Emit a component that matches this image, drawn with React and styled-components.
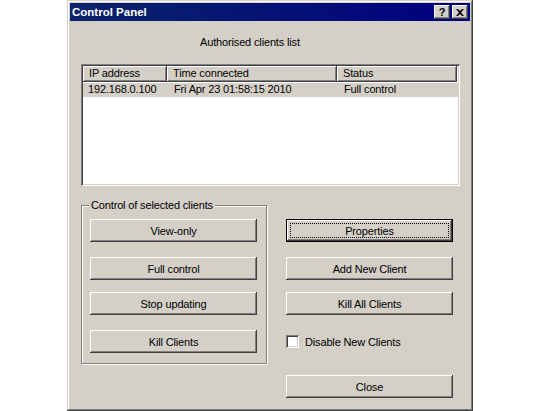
import React from "react";
import styled, { createGlobalStyle } from "styled-components";

const GlobalStyle = createGlobalStyle`
  body {
    margin: 0;
    background: #ffffff;
    font-family: "Liberation Sans", Arial, sans-serif;
    font-size: 11px;
    letter-spacing: -0.15px;
    color: #000;
  }
`;

const Page = styled.div`
  padding-left: 67px;
`;

const Window = styled.div`
  width: 406px;
  height: 411px;
  box-sizing: border-box;
  padding: 3px;
  background: #d4d0c8;
  box-shadow: inset -1px -1px #404040, inset 1px 1px #d4d0c8,
    inset -2px -2px #808080, inset 2px 2px #ffffff;
`;

const TitleBar = styled.div`
  height: 18px;
  display: flex;
  align-items: center;
  justify-content: space-between;
  padding: 0 2px 0 2px;
  background: linear-gradient(to right, #0a246a, #000080);
  color: #fff;
  font-weight: bold;
  font-size: 11.5px;
  letter-spacing: 0;
`;

const TitleButtons = styled.div`
  display: flex;
  gap: 2px;
`;

const TitleButton = styled.div`
  width: 16px;
  height: 14px;
  box-sizing: border-box;
  background: #d4d0c8;
  color: #000;
  display: flex;
  align-items: center;
  justify-content: center;
  font-size: 11px;
  font-weight: bold;
  box-shadow: inset -1px -1px #404040, inset 1px 1px #ffffff,
    inset -2px -2px #808080, inset 2px 2px #d4d0c8;
`;

const Body = styled.div`
  padding-left: 11px;
`;

const Caption = styled.div`
  margin-top: 14px;
  padding-left: 119px;
  line-height: 14px;
`;

const ListView = styled.div`
  margin-top: 15px;
  width: 379px;
  height: 122px;
  box-sizing: border-box;
  padding: 2px;
  background: #fff;
  box-shadow: inset 1px 1px #808080, inset -1px -1px #ffffff,
    inset 2px 2px #404040, inset -2px -2px #d4d0c8;
`;

const HeaderRow = styled.div`
  display: flex;
  height: 16px;
`;

const HeaderCell = styled.div`
  width: ${(p) => p.$w}px;
  box-sizing: border-box;
  padding-left: 6px;
  line-height: 15px;
  background: #d4d0c8;
  box-shadow: inset -1px -1px #404040, inset 1px 1px #ffffff,
    inset -2px -2px #808080;
`;

const Row = styled.div`
  display: flex;
  height: 14px;
  margin-top: 1px;
  background: ${(p) => (p.$selected ? "#d4d0c8" : "transparent")};
`;

const Cell = styled.div`
  width: ${(p) => p.$w}px;
  box-sizing: border-box;
  padding-left: ${(p) => p.$pl}px;
  line-height: 13px;
  white-space: nowrap;
`;

const Lower = styled.div`
  display: flex;
  gap: 19px;
  margin-top: 19px;
`;

const GroupBox = styled.div`
  position: relative;
  width: 186px;
  height: 159px;
  box-sizing: border-box;
  padding: 13px 9px 0 8px;
  border: 1px solid #808080;
  box-shadow: inset 1px 1px #ffffff, 1px 1px #ffffff;
  display: flex;
  flex-direction: column;
`;

const Legend = styled.span`
  position: absolute;
  top: -7px;
  left: 7px;
  padding: 0 2px;
  line-height: 13px;
  background: #d4d0c8;
`;

const Column = styled.div`
  width: 167px;
  display: flex;
  flex-direction: column;
`;

const Button = styled.div`
  width: 167px;
  height: 23px;
  margin-top: ${(p) => p.$mt || 0}px;
  box-sizing: border-box;
  display: flex;
  align-items: center;
  justify-content: center;
  position: relative;
  background: #d4d0c8;
  box-shadow: ${(p) =>
    p.$default
      ? "inset 0 0 0 1px #000, inset -2px -2px #404040, inset 2px 2px #ffffff, inset -3px -3px #808080"
      : "inset -1px -1px #404040, inset 1px 1px #ffffff, inset -2px -2px #808080, inset 2px 2px #d4d0c8"};
`;

const FocusRing = styled.span`
  position: absolute;
  inset: 4px;
  border: 1px dotted #000;
`;

const CheckRow = styled.label`
  height: 23px;
  margin-top: 15px;
  display: flex;
  align-items: center;
  gap: 6px;
`;

const CheckBox = styled.span`
  width: 13px;
  height: 13px;
  box-sizing: border-box;
  background: #fff;
  box-shadow: inset 1px 1px #808080, inset -1px -1px #ffffff,
    inset 2px 2px #404040, inset -2px -2px #d4d0c8;
`;

export default function App() {
  return (
    <Page>
      <GlobalStyle />
      <Window>
        <TitleBar>
          <span>Control Panel</span>
          <TitleButtons>
            <TitleButton>?</TitleButton>
            <TitleButton>
              <svg width="8" height="7" viewBox="0 0 8 7">
                <path d="M0 0h2l2 2 2-2h2L5 3.5 8 7H6L4 5 2 7H0l3-3.5z" fill="#000" />
              </svg>
            </TitleButton>
          </TitleButtons>
        </TitleBar>
        <Body>
          <Caption>Authorised clients list</Caption>
          <ListView>
            <HeaderRow>
              <HeaderCell $w={84}>IP address</HeaderCell>
              <HeaderCell $w={170}>Time connected</HeaderCell>
              <HeaderCell $w={120}>Status</HeaderCell>
            </HeaderRow>
            <Row $selected>
              <Cell $w={84} $pl={5}>192.168.0.100</Cell>
              <Cell $w={170} $pl={7}>Fri Apr 23 01:58:15 2010</Cell>
              <Cell $w={120} $pl={7}>Full control</Cell>
            </Row>
          </ListView>
          <Lower>
            <GroupBox>
              <Legend>Control of selected clients</Legend>
              <Button>View-only</Button>
              <Button $mt={15}>Full control</Button>
              <Button $mt={12}>Stop updating</Button>
              <Button $mt={15}>Kill Clients</Button>
            </GroupBox>
            <Column>
              <Button $mt={14} $default>
                <FocusRing />
                Properties
              </Button>
              <Button $mt={15}>Add New Client</Button>
              <Button $mt={12}>Kill All Clients</Button>
              <CheckRow>
                <CheckBox />
                Disable New Clients
              </CheckRow>
              <Button $mt={22}>Close</Button>
            </Column>
          </Lower>
        </Body>
      </Window>
    </Page>
  );
}
